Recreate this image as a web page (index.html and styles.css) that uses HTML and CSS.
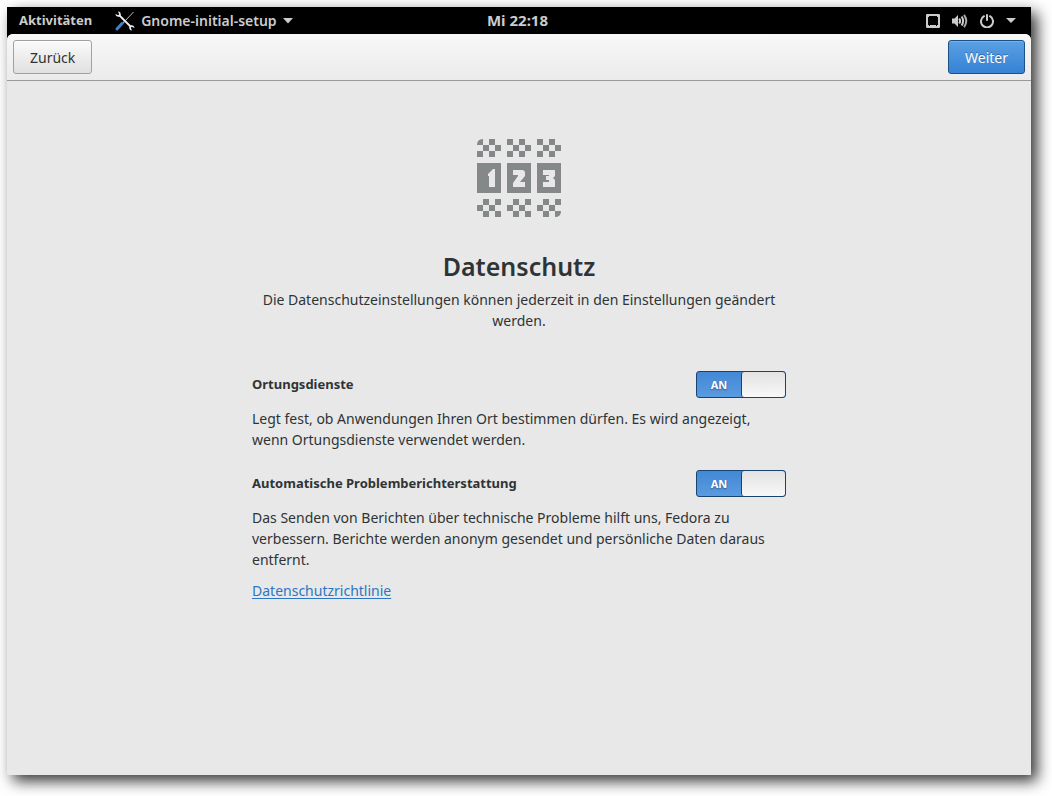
FILE: index.html
```html
<!DOCTYPE html>
<html lang="de">
<head>
<meta charset="utf-8">
<title>Datenschutz</title>
<link rel="stylesheet" href="styles.css">
</head>
<body>
<div class="screen">
  <header class="topbar">
    <div class="topbar-left">
      <button class="topbar-item" type="button">Aktivitäten</button>
      <button class="topbar-item app-menu" type="button">
        <svg class="tools" width="20" height="20" viewBox="0 0 20 20" aria-hidden="true">
          <path d="M18.500 1 10 10" stroke="#bbb" stroke-width="1"/>
          <path d="M9.500 10.500 7 13" stroke="#999" stroke-width="1.500"/>
          <path d="M7 12.500 2 18" stroke="#3f7fc4" stroke-width="3" stroke-linecap="round"/>
          <path d="M4 4 16 16" stroke="#eee" stroke-width="1.800"/>
          <path d="M3 .5 4.200 3.200 3.200 4.200.5 3C.5 5.200 2.500 6.300 4.600 5.600L5.600 4.600C6.300 2.500 5.200 .5 3 .5ZM17 19.500 15.800 16.800 16.800 15.800 19.500 17C19.500 14.800 17.500 13.700 15.400 14.400L14.400 15.400C13.700 17.500 14.800 19.500 17 19.500Z" fill="#eee"/>
        </svg>
        <span>Gnome-initial-setup</span>
        <svg width="10" height="6" viewBox="0 0 10 6" aria-hidden="true"><path d="M0 0H10L5 5.500Z" fill="#ccc"/></svg>
      </button>
    </div>
    <time class="clock">Mi 22:18</time>
    <button class="topbar-item status" type="button" aria-label="Systemmenü">
      <svg width="14" height="14" viewBox="0 0 14 14"><path fill="#ccc" fill-rule="evenodd" d="M1 0H13Q14 0 14 1V13Q14 14 13 14H1Q0 14 0 13V1Q0 0 1 0ZM3 2V3H2V11H3V12H4V11H10V12H11V11H12V3H11V2Z"/></svg>
      <svg width="16" height="14" viewBox="0 0 16 14" fill="none" stroke="#ccc" stroke-width="2"><path d="M0 4.500H2.500L6 1V13L2.500 9.500H0Z" fill="#ccc" stroke="none"/><path d="M7.200 4.500Q9 7 7.200 9.500M9.600 2.500Q12.600 7 9.600 11.500"/><path d="M12 .8Q16.600 7 12 13.200" stroke="#aaa"/></svg>
      <svg width="14" height="14" viewBox="0 0 14 14" fill="none" stroke="#ccc" stroke-width="2" stroke-linecap="round"><path d="M4 2.200A6 6 0 1 0 10 2.200M7 1V6"/></svg>
      <svg width="10" height="6" viewBox="0 0 10 6"><path d="M0 0H10L5 5Z" fill="#ccc"/></svg>
    </button>
  </header>
  <div class="window">
    <nav class="headerbar">
      <button class="button" type="button">Zurück</button>
      <button class="button suggested" type="button">Weiter</button>
    </nav>
    <main class="page">
      <svg class="emblem" width="84" height="78" viewBox="0 0 84 78" fill="#858888" aria-hidden="true">
        <defs>
          <path id="checks" d="M0 0h6v6h-6zM12 0h6v6h-6zM6 6h6v6h-6zM18 6h6v6h-6zM0 12h6v6h-6zM12 12h6v6h-6z"/>
          <path id="checks-low" d="M6 0h6v6h-6zM18 0h6v6h-6zM0 6h6v6h-6zM12 6h6v6h-6zM6 12h6v6h-6zM18 12h6v6h-6z"/>
        </defs>
        <path d="M6 0V6H0Q0 0 6 0ZM12 0h6v6h-6zM6 6h6v6h-6zM18 6h6v6h-6zM0 12h6v6h-6zM12 12h6v6h-6z"/>
        <use href="#checks" x="30"/><use href="#checks" x="60"/>
        <path d="M0 24H24V54H0ZM30 24H54V54H30ZM60 24H84V54H60Z"/>
        <path fill="#e8e8e8" d="M18 30V48H12V37H11V35L16 30ZM36 31H45Q48 31 48 34V37L43 43H48V48H36V44L41 37V36H36ZM66 31H78V37L76 39L78 41V48H66V43H72V41H69V37H72V36H66Z"/>
        <use href="#checks-low" y="60"/><use href="#checks-low" x="30" y="60"/>
        <path d="M66 60h6v6h-6zM78 60h6v6h-6zM60 66h6v6h-6zM72 66h6v6h-6zM66 72h6v6h-6zM78 72H84Q84 78 78 78Z"/>
      </svg>
      <h1>Datenschutz</h1>
      <p class="intro">Die Datenschutzeinstellungen können jederzeit in den Einstellungen geändert werden.</p>
      <section class="setting">
        <div class="setting-head">
          <label for="location">Ortungsdienste</label>
          <span class="switch"><input id="location" type="checkbox" role="switch" checked><span class="on">AN</span><span class="knob"></span></span>
        </div>
        <p>Legt fest, ob Anwendungen Ihren Ort bestimmen dürfen. Es wird angezeigt, wenn Ortungsdienste verwendet werden.</p>
      </section>
      <section class="setting">
        <div class="setting-head">
          <label for="reports">Automatische Problemberichterstattung</label>
          <span class="switch"><input id="reports" type="checkbox" role="switch" checked><span class="on">AN</span><span class="knob"></span></span>
        </div>
        <p>Das Senden von Berichten über technische Probleme hilft uns, Fedora zu verbessern. Berichte werden anonym gesendet und persönliche Daten daraus entfernt.</p>
        <a class="policy" href="#">Datenschutzrichtlinie</a>
      </section>
    </main>
  </div>
</div>
</body>
</html>
```
FILE: styles.css
```css
* { box-sizing: border-box; }
body {
  margin: 0;
  padding: 7px 21px 21px 7px;
  min-height: 100vh;
  display: flex;
  background: #fff;
  color: #2e3436;
  font: 14px/21px "Noto Sans", "Open Sans", sans-serif;
}
button { font: inherit; color: inherit; }
h1, p { margin: 0; }
.screen {
  flex: 1;
  display: flex;
  flex-direction: column;
  background: #000;
  box-shadow: 6px 6px 14px rgba(0, 0, 0, .8);
}
.topbar {
  display: grid;
  grid-template-columns: 1fr auto 1fr;
  align-items: center;
  height: 27px;
  padding: 0 15px 0 12px;
  color: #ccc;
  font-size: 13px;
  font-weight: 700;
}
.topbar-left { display: flex; gap: 23px; }
.topbar-item {
  display: flex;
  align-items: center;
  padding: 0;
  border: 0;
  background: none;
}
.app-menu { gap: 6px; font-size: 14px; font-weight: 600; }
.clock { font-size: 15px; }
.status { justify-self: end; gap: 12px; }
.window {
  flex: 1;
  display: flex;
  flex-direction: column;
  border-radius: 6px 6px 0 0;
  background: #e8e8e8;
  overflow: hidden;
}
.headerbar {
  display: flex;
  justify-content: space-between;
  padding: 6px;
  border-bottom: 1px solid #999;
  background: linear-gradient(#f8f8f8, #ebebeb);
}
.button {
  height: 34px;
  padding: 0 16px;
  border: 1px solid #a1a1a1;
  border-radius: 3px;
  background: linear-gradient(#fafafa, #e0e0e0);
  box-shadow: inset 0 1px #fff;
}
.suggested {
  border-color: #1c5187;
  background: linear-gradient(#5b9fe3, #3583d5);
  box-shadow: inset 0 1px #78b2eb;
  color: #fff;
  text-shadow: 0 -1px rgba(0, 0, 0, .3);
}
.page {
  width: 100%;
  max-width: 534px;
  margin: 0 auto;
  padding: 58px 0;
  display: flex;
  flex-direction: column;
}
.emblem { align-self: center; }
h1 {
  margin-top: 32px;
  font-size: 25px;
  line-height: 34px;
  font-weight: 600;
  text-align: center;
}
.intro { margin-top: 6px; padding: 0 8px; text-align: center; }
.setting { margin-top: 20px; }
.intro + .setting { margin-top: 40px; }
.setting-head {
  display: flex;
  justify-content: space-between;
  align-items: center;
  font-size: 13px;
  font-weight: 700;
}
.setting p { margin-top: 10px; padding-right: 16px; }
.switch {
  position: relative;
  display: grid;
  grid-template-columns: 1fr 1fr;
  width: 90px;
  height: 27px;
  border: 1px solid #184472;
  border-radius: 3px;
  background: linear-gradient(#4388d6, #5a9be0);
  overflow: hidden;
}
.switch input {
  position: absolute;
  inset: 0;
  width: 100%;
  height: 100%;
  margin: 0;
  opacity: 0;
}
.on {
  color: #fff;
  font-size: 11px;
  line-height: 25px;
  text-align: center;
  text-shadow: 0 1px 2px rgba(0, 0, 0, .4);
}
.knob {
  border-left: 1px solid #184472;
  border-radius: 3px;
  background: linear-gradient(#e2e2e2, #f8f8f8);
}
.policy {
  display: inline-block;
  margin-top: 10px;
  color: #2a76c6;
  text-underline-offset: 2px;
}
```
